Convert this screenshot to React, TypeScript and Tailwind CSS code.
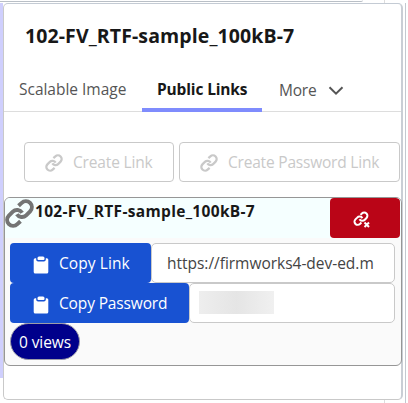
import React from "react";

function LinkIcon({ className, width = 3 }: { className: string; width?: number }) {
  return (
    <svg viewBox="0 0 24 24" className={className} fill="none" stroke="currentColor" strokeWidth={width}>
      <path d="M9.8 12.6a5 5 0 0 0 7.7.9l3.3-3.3a4.95 4.95 0 0 0-7-7l-2.6 2.4" />
      <path d="M14.2 11.4a5 5 0 0 0-7.7-.9l-3.3 3.3a4.95 4.95 0 0 0 7 7l2.6-2.4" />
    </svg>
  );
}

function ClipboardIcon() {
  return (
    <svg viewBox="0 0 16 18" className="mt-[3px] h-[18px] w-4 shrink-0" fill="currentColor">
      <path d="M4.5 3V2a1.5 1.5 0 0 1 1.5-1.5h4A1.5 1.5 0 0 1 11.5 2v1a1 1 0 0 1-1 1h-5a1 1 0 0 1-1-1Z" />
      <path d="M2.2 2.2h1V3.500a1.900 1.900 0 0 0 1.900 1.900h5.800a1.900 1.900 0 0 0 1.900-1.900V2.200h1A1.500 1.500 0 0 1 15.300 3.700v12.300a1.600 1.600 0 0 1-1.600 1.600H2.300A1.600 1.600 0 0 1 .7 16V3.700A1.500 1.500 0 0 1 2.200 2.200Z" />
    </svg>
  );
}

function CreateButton({ label, className, text }: { label: string; className: string; text: string }) {
  return (
    <button className={`flex h-10 shrink-0 items-center rounded-[4px] border border-[#c9c9c9] bg-white pl-5 text-[#c9c9c9] ${className}`}>
      <LinkIcon className="mr-[10px] mt-[2px] size-[18px] shrink-0" />
      <span className={`mt-[2px] whitespace-nowrap text-[15.5px] ${text}`}>{label}</span>
    </button>
  );
}

export default function App() {
  return (
    <div className="flex h-[403px] w-[408px] flex-col overflow-hidden bg-white font-['Open_Sans','Noto_Sans',sans-serif] text-[15.5px] text-[#181818]">
      <div className="flex h-[3px] shrink-0">
        <div className="h-[2px] w-[363px] rounded-br-[3px] border-b border-[#b9bfc6] bg-white" />
        <div className="ml-[21px] w-px bg-[#dddddd]" />
      </div>
      <div className="flex h-[397px] shrink-0">
        <div className="h-[375px] w-[3px] shrink-0 bg-[#cfcffd]" />
        <section className="flex h-[397px] w-[400px] shrink-0 flex-col rounded-[5px] border border-r-2 border-[#c9c9c9] border-r-[#c9ced5] border-t-[#c4cbd4] bg-white">
          <h1 className="mt-[18px] h-[28px] whitespace-nowrap pl-[21px] text-[19.5px] font-bold leading-[28px] tracking-[0.1px]">102-FV_RTF-sample_100kB-7</h1>
          <nav className="mt-[18px] flex h-[44px] shrink-0 border-b border-[#dddddd] leading-[43px] text-[#555]">
            <div className="w-[138px] whitespace-nowrap pl-[15px] tracking-[-0.02px]">Scalable Image</div>
            <div className="h-[44px] w-[120px] whitespace-nowrap border-b-4 border-[#7f8cfd] pl-[15px] font-bold tracking-[-0.15px] text-[#181818]">Public Links</div>
            <div className="flex items-center pl-[17px]">
              <span className="mt-px tracking-[-0.2px]">More</span>
              <svg viewBox="0 0 16 10" className="ml-[11px] mt-[2px] h-[10px] w-4" fill="none" stroke="currentColor" strokeWidth="2">
                <path d="m1.500 1.200 6.500 6.500 6.500-6.500" />
              </svg>
            </div>
          </nav>
          <div className="mt-[30px] flex shrink-0 gap-[5px] pl-5">
            <CreateButton label="Create Link" className="w-[150px]" text="tracking-[-0.16px]" />
            <CreateButton label="Create Password Link" className="w-[221px]" text="tracking-[-0.2px]" />
          </div>
          <article className="mt-[15px] flex h-[169px] w-[398px] shrink-0 flex-col overflow-hidden rounded-[6px] border border-[#969696] bg-[#fafafa]">
            <header className="flex h-[40px] shrink-0 items-start bg-[#f5ffff]">
              <LinkIcon className="mt-px size-[29px] shrink-0 text-[#747474]" width={3.3} />
              <h2 className="ml-px mt-[2px] w-[295px] whitespace-nowrap font-bold leading-[22px] tracking-[0.32px]">102-FV_RTF-sample_100kB-7</h2>
              <button className="flex h-[40px] w-[70px] items-center justify-center rounded-[4px] bg-[#ba0517] text-white">
                <svg viewBox="0 0 18 18" className="mr-[6px] mt-1 h-[18px] w-[18px]" fill="none" stroke="currentColor" strokeWidth="2">
                  <path d="M6.500 8.200a3.300 3.300 0 0 0 5.300.6l1.700-1.800a3.200 3.200 0 0 0-4.600-4.500L7.500 3.900" />
                  <path d="M9.400 7.100a3.300 3.300 0 0 0-5.200-.500L2.400 8.400a3.200 3.200 0 0 0 4.600 4.500l1.400-1.300" />
                  <path d="m11.500 11.500 4.500 4.500m0-4.500-4.500 4.500" />
                </svg>
              </button>
            </header>
            <div className="mt-[5px] flex h-[40px] shrink-0 pl-[5px]">
              <button className="flex w-[141px] items-center whitespace-nowrap rounded-[4px] bg-[#1852d2] pl-[23px] text-white"><ClipboardIcon /><span className="ml-[10px] mt-[2px] tracking-[0.08px]">Copy Link</span></button>
              <div className="flex w-[244px] items-center whitespace-nowrap rounded-[5px] border border-[#c9c9c9] bg-white pl-[15px] pt-[2px] tracking-[-0.02px] text-[#444]">https://firmworks4-dev-ed.m</div>
            </div>
            <div className="flex h-[40px] shrink-0 pl-[5px]">
              <button className="flex w-[179px] items-center whitespace-nowrap rounded-[4px] bg-[#1852d2] pl-[23px] text-white"><ClipboardIcon /><span className="ml-[10px] mt-[2px] tracking-[-0.14px]">Copy Password</span></button>
              <div className="flex w-[206px] items-center rounded-[5px] border border-[#c9c9c9] bg-white pl-[9px]">
                <div className="mb-[2px] h-[23px] w-[75px] bg-linear-to-r from-[#eeeeee] via-[#e5e5e5] to-[#f0f0f0]" />
              </div>
            </div>
            <div className="ml-[5px] flex h-[37px] w-[70px] items-center justify-center whitespace-nowrap rounded-full border border-[#9d9da8] bg-[#00008b] pt-[2px] tracking-[-0.1px] text-white">0 views</div>
          </article>
        </section>
        <div className="ml-[2px] h-full w-px bg-[#c3c9d0]" />
      </div>
      <div className="ml-[384px] flex h-[3px] shrink-0">
        <div className="w-px bg-[#dddddd]" />
        <div className="ml-[20px] w-px bg-[#c3c9d0]" />
      </div>
    </div>
  );
}
